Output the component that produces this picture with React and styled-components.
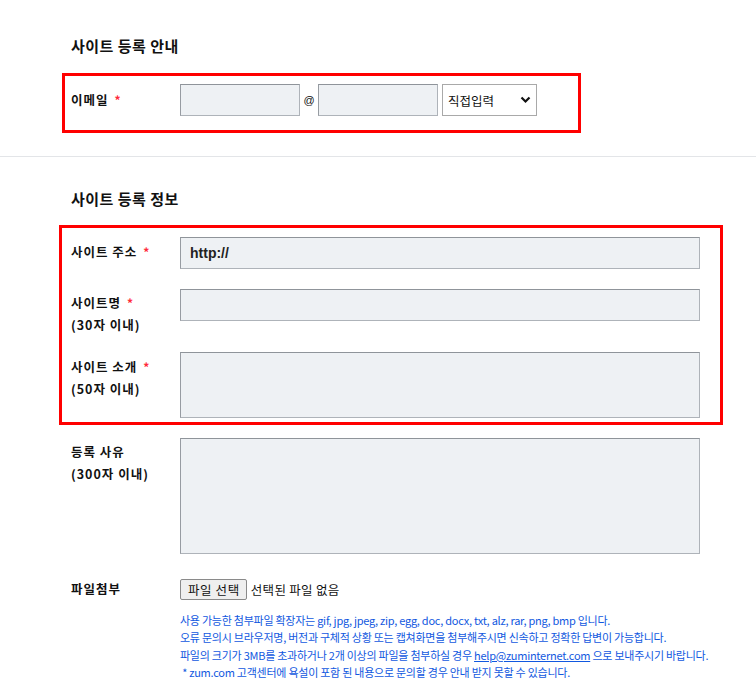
import React from "react";
import styled, { createGlobalStyle } from "styled-components";

const Global = createGlobalStyle`
  html, body { margin: 0; padding: 0; background: #fff; }
  body {
    font-family: "Noto Sans CJK KR", "Noto Sans", "Liberation Sans", sans-serif;
    color: #111;
  }
  * { box-sizing: border-box; }
`;

const Page = styled.div`
  width: 756px;
  min-height: 691px;
  background: #fff;
`;

const Section = styled.section`
  padding: ${(p) => p.$top}px 56px ${(p) => p.$bottom}px 71px;
`;

const Title = styled.h2`
  margin: 0;
  font-size: 15px;
  line-height: 20px;
  font-weight: 700;
  letter-spacing: 0.5px;
  color: #111;
`;

const Highlight = styled.div`
  border: 3px solid #ff0000;
  margin-top: ${(p) => p.$mt}px;
  margin-left: ${(p) => -p.$inset}px;
  margin-right: ${(p) => p.$right}px;
  padding: ${(p) => p.$pt}px ${(p) => p.$pr}px ${(p) => p.$pb}px ${(p) => p.$inset - 3}px;
  width: ${(p) => (p.$width ? `${p.$width}px` : "auto")};
`;

const Row = styled.div`
  display: grid;
  grid-template-columns: 109px 1fr;
  align-items: start;
  margin-top: ${(p) => p.$mt || 0}px;
`;

const Label = styled.div`
  padding-top: ${(p) => (p.$pt != null ? p.$pt : 4)}px;
  font-size: 12.5px;
  line-height: ${(p) => p.$lh || 22}px;
  font-weight: 700;
  letter-spacing: 1px;
  color: #111;
`;

const Star = styled.span`
  color: #ff2b3a;
  font-size: 12px;
  font-weight: 700;
  margin-left: 6px;
`;

const Inline = styled.div`
  display: flex;
  align-items: center;
`;

const Input = styled.input`
  display: block;
  width: ${(p) => (p.$w ? `${p.$w}px` : "100%")};
  height: 32px;
  background: #eef1f4;
  border: 1px solid #aeb3b9;
  border-top-color: #8f949a;
  border-left-color: #979ca2;
  padding: 0 9px;
  font-family: "Liberation Sans", Arial, sans-serif;
  font-size: 14px;
  font-weight: 700;
  color: #222;
  outline: none;
`;

const TextArea = styled.textarea`
  display: block;
  width: 100%;
  height: ${(p) => p.$h}px;
  background: #eef1f4;
  border: 1px solid #aeb3b9;
  border-top-color: #8f949a;
  border-left-color: #979ca2;
  resize: none;
  outline: none;
  margin: 0;
`;

const At = styled.span`
  font-family: "Liberation Sans", Arial, sans-serif;
  font-size: 11px;
  color: #111;
  width: 18px;
  text-align: center;
`;

const SelectWrap = styled.div`
  position: relative;
  margin-left: 4px;
  width: 95px;
  height: 32px;
`;

const Select = styled.select`
  appearance: none;
  -webkit-appearance: none;
  width: 100%;
  height: 100%;
  border: 1px solid #a9a9a9;
  background: #fff;
  padding: 0 0 0 5px;
  font-family: "Noto Sans CJK KR", sans-serif;
  font-size: 12.5px;
  color: #111;
  outline: none;
`;

const Chevron = styled.svg`
  position: absolute;
  right: 6px;
  top: 12px;
  pointer-events: none;
`;

const Divider = styled.hr`
  margin: 0;
  border: 0;
  border-top: 1px solid #e3e5e8;
`;

const FileBox = styled.div`
  display: flex;
  align-items: center;
`;

const FileButton = styled.button`
  height: 21px;
  padding: 0 6px 0 7px;
  background: #efefef;
  border: 1px solid #8a8a8a;
  border-radius: 2px;
  font-family: "Noto Sans CJK KR", sans-serif;
  font-size: 12.5px;
  letter-spacing: 0.6px;
  color: #111;
  line-height: 19px;
`;

const FileName = styled.span`
  margin-left: 4px;
  font-size: 12.5px;
  letter-spacing: 0.3px;
  color: #111;
`;

const Notes = styled.div`
  margin-top: 12px;
  margin-left: 109px;
  font-size: 11px;
  line-height: 17.4px;
  letter-spacing: -0.25px;
  color: #1158e0;
  white-space: nowrap;
`;

const NoteLine = styled.div``;

const Mail = styled.span`
  text-decoration: underline;
`;

export default function App() {
  return (
    <Page>
      <Global />
      <Section $top={36} $bottom={23}>
        <Title>사이트 등록 안내</Title>
        <Highlight $mt={17} $inset={9} $right={0} $pt={8} $pr={0} $pb={14} $width={519}>
          <Row>
            <Label $pt={5}>
              이메일<Star>*</Star>
            </Label>
            <Inline>
              <Input $w={120} />
              <At>@</At>
              <Input $w={120} />
              <SelectWrap>
                <Select defaultValue="direct">
                  <option value="direct">직접입력</option>
                </Select>
                <Chevron width="11" height="8" viewBox="0 0 11 8">
                  <path d="M1.5 1.5 L5.5 5.5 L9.5 1.5" fill="none" stroke="#111" strokeWidth="2.2" />
                </Chevron>
              </SelectWrap>
            </Inline>
          </Row>
        </Highlight>
      </Section>
      <Divider />
      <Section $top={32} $bottom={0}>
        <Title>사이트 등록 정보</Title>
        <Highlight $mt={16} $inset={12} $right={-23} $pt={9} $pr={20} $pb={4}>
          <Row>
            <Label>
              사이트 주소<Star>*</Star>
            </Label>
            <Input defaultValue="http://" />
          </Row>
          <Row $mt={20}>
            <Label $pt={3}>
              사이트명<Star>*</Star>
              <br />
              (30자 이내)
            </Label>
            <Input />
          </Row>
          <Row $mt={16}>
            <Label>
              사이트 소개<Star>*</Star>
              <br />
              (50자 이내)
            </Label>
            <TextArea $h={66} />
          </Row>
        </Highlight>
        <Row $mt={13}>
          <Label $pt={3}>
            등록 사유
            <br />
            (300자 이내)
          </Label>
          <TextArea $h={116} />
        </Row>
        <Row $mt={25}>
          <Label $pt={0} $lh={20}>파일첨부</Label>
          <FileBox>
            <FileButton type="button">파일 선택</FileButton>
            <FileName>선택된 파일 없음</FileName>
          </FileBox>
        </Row>
        <Notes>
          <NoteLine>사용 가능한 첨부파일 확장자는 gif, jpg, jpeg, zip, egg, doc, docx, txt, alz, rar, png, bmp 입니다.</NoteLine>
          <NoteLine>오류 문의시 브라우저명, 버전과 구체적 상황 또는 캡쳐화면을 첨부해주시면 신속하고 정확한 답변이 가능합니다.</NoteLine>
          <NoteLine>
            파일의 크기가 3MB를 초과하거나 2개 이상의 파일을 첨부하실 경우 <Mail>help@zuminternet.com</Mail> 으로 보내주시기 바랍니다.
          </NoteLine>
          <NoteLine>&nbsp;* zum.com 고객센터에 욕설이 포함 된 내용으로 문의할 경우 안내 받지 못할 수 있습니다.</NoteLine>
        </Notes>
      </Section>
    </Page>
  );
}
